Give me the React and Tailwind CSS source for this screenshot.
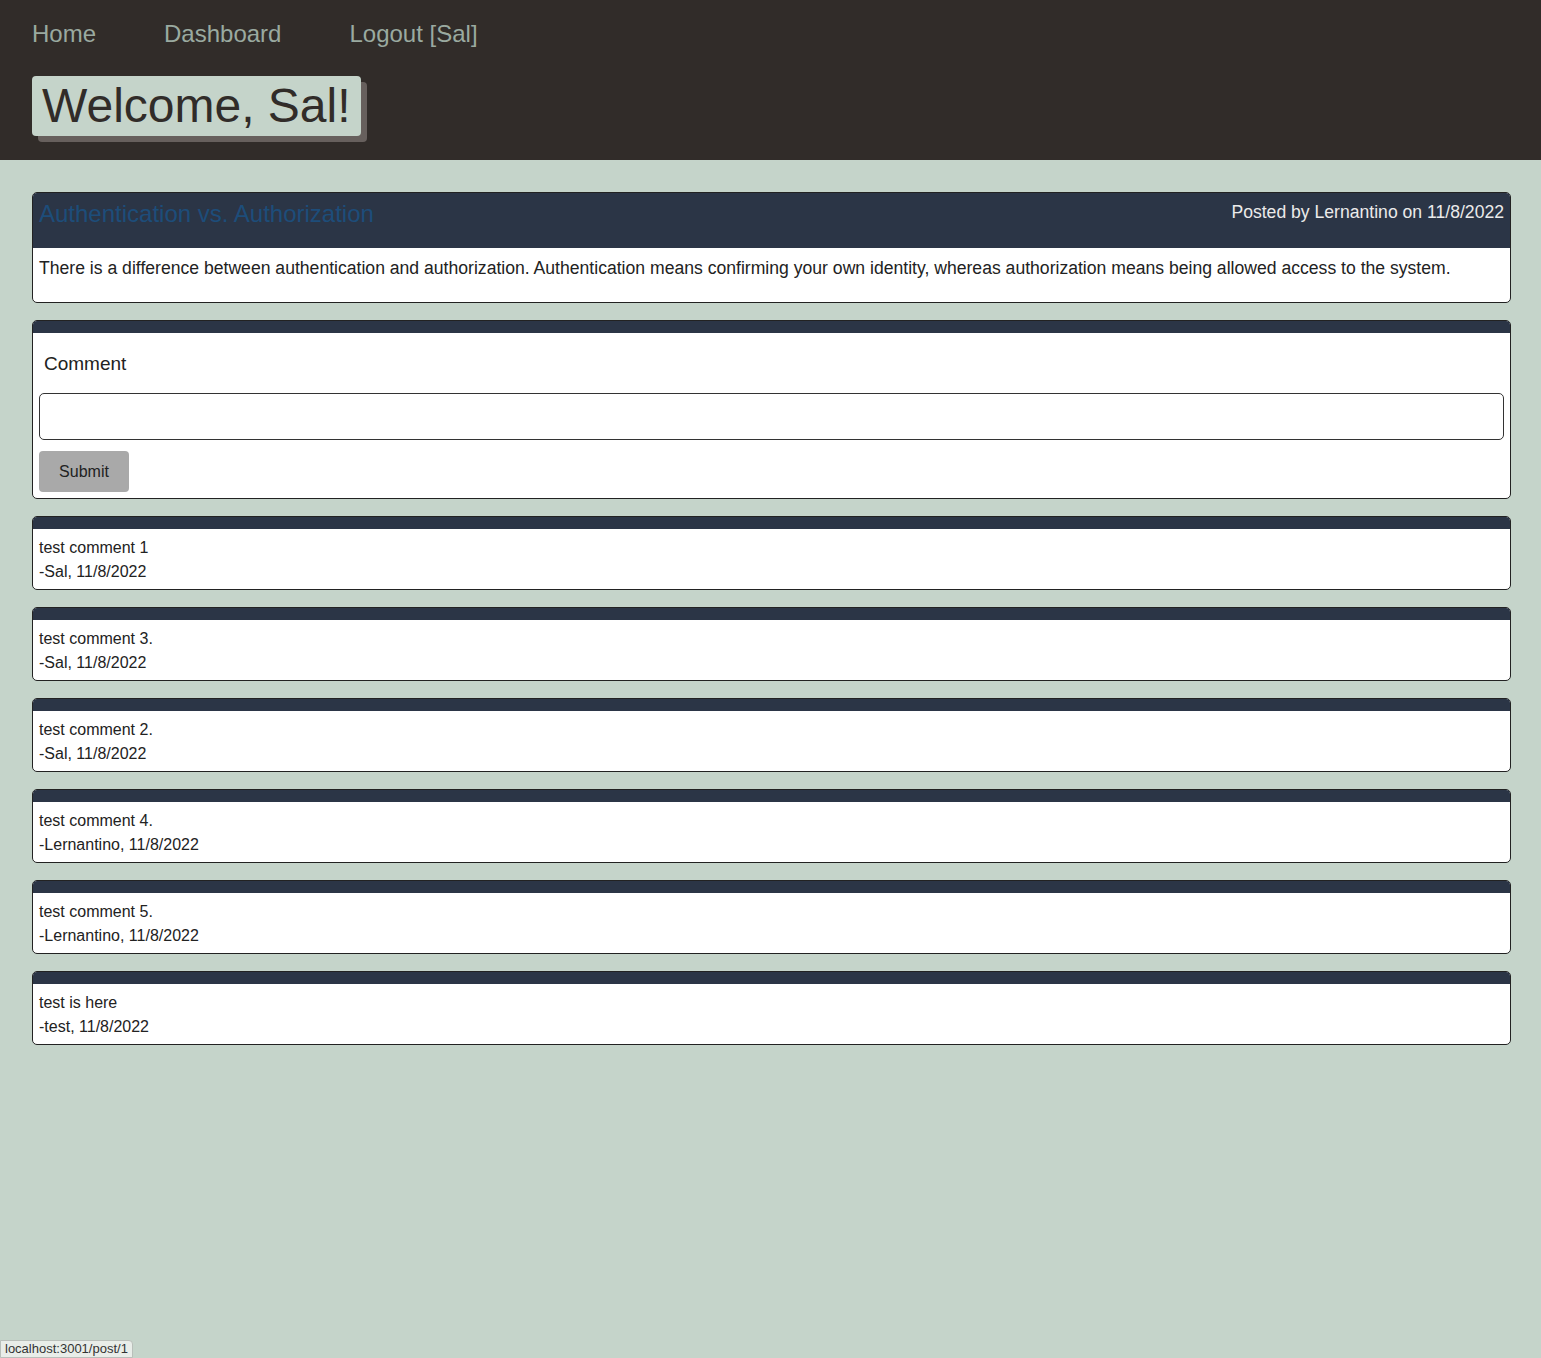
const comments = [
  { text: 'test comment 1', by: 'Sal', date: '11/8/2022' },
  { text: 'test comment 3.', by: 'Sal', date: '11/8/2022' },
  { text: 'test comment 2.', by: 'Sal', date: '11/8/2022' },
  { text: 'test comment 4.', by: 'Lernantino', date: '11/8/2022' },
  { text: 'test comment 5.', by: 'Lernantino', date: '11/8/2022' },
  { text: 'test is here', by: 'test', date: '11/8/2022' },
];

export default function App() {
  return (
    <div className="min-h-[1358px] bg-[#c5d4ca] text-[#222] relative" style={{ fontFamily: '"Liberation Sans", Arial, sans-serif' }}>
      <header className="bg-[#312c29] h-[160px] px-8 pt-[20px]">
        <nav className="flex gap-[68px] text-[24px] leading-[28px] text-[#9aaaa0]">
          <a href="#">Home</a>
          <a href="#">Dashboard</a>
          <a href="#">Logout [Sal]</a>
        </nav>
        <h1 className="mt-[28px] inline-block bg-[#c5d4ca] text-[#312c29] text-[48px] leading-[60px] px-[10px] rounded-[4px] shadow-[6px_6px_0_#67605d]">
          Welcome, Sal!
        </h1>
      </header>

      <main className="pl-8 pr-[30px] pt-8 flex flex-col gap-[17px]">
        {/* post */}
        <article className="bg-white border border-[#222] rounded-[5px] overflow-hidden">
          <div className="bg-[#2b3546] h-[55px] flex justify-between items-start px-[6px]">
            <h2 className="pt-[7px] text-[24px] leading-[28px] text-[#1d4d7a]">Authentication vs. Authorization</h2>
            <p className="pt-[9px] text-[17.6px] leading-[20px] text-[#ebebeb]">Posted by Lernantino on 11/8/2022</p>
          </div>
          <p className="px-[6px] pt-[8px] pb-[22px] text-[17.6px] leading-[24px]">
            There is a difference between authentication and authorization. Authentication means confirming your own identity, whereas authorization means being allowed access to the system.
          </p>
        </article>

        {/* comment form */}
        <form className="bg-white border border-[#222] rounded-[5px] overflow-hidden" onSubmit={(e) => e.preventDefault()}>
          <div className="bg-[#2b3546] h-[12px]"></div>
          <div className="px-[6px] pt-[20px] pb-[6px]">
            <label className="block pl-[5px] text-[19px] leading-[22px]">Comment</label>
            <input className="block mt-[18px] w-full h-[47px] border border-[#333] rounded-[5px] px-2 outline-none" />
            <button type="submit" className="mt-[11px] w-[90px] h-[41px] bg-[#a9a9a9] rounded-[4px] text-[16px]">Submit</button>
          </div>
        </form>

        {comments.map((c, i) => (
          <div key={i} className="bg-white border border-[#222] rounded-[5px] overflow-hidden">
            <div className="bg-[#2b3546] h-[12px]"></div>
            <div className="px-[6px] pt-[7px] pb-[5px] text-[16px] leading-[24px]">
              <p>{c.text}</p>
              <p>-{c.by}, {c.date}</p>
            </div>
          </div>
        ))}
      </main>

      <div className="absolute left-0 bottom-0 h-[18px] bg-[#e9ede9] border border-[#b9bfba] rounded-tr-[4px] px-[4px] text-[13px] leading-[16px] text-[#333]">
        localhost:3001/post/1
      </div>
    </div>
  );
}
